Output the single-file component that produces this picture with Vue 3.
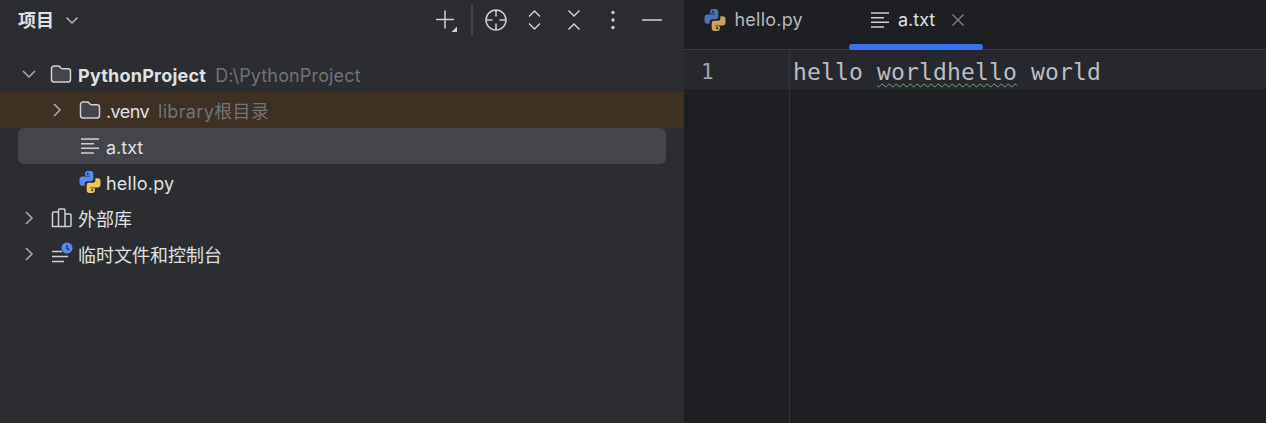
<script setup>
const tree = [
  { id: 'root', depth: 0, arrow: 'down', icon: 'folder', name: 'PythonProject', hint: 'D:\\PythonProject', bold: true, latin: true },
  { id: 'venv', depth: 1, arrow: 'right', icon: 'folder', name: '.venv', hint: 'library根目录', excluded: true, tight: true },
  { id: 'txt', depth: 1, icon: 'text', name: 'a.txt', selected: true },
  { id: 'py', depth: 1, icon: 'python', name: 'hello.py', latin: true },
  { id: 'lib', depth: 0, arrow: 'right', icon: 'library', name: '外部库', cjk: true },
  { id: 'scratch', depth: 0, arrow: 'right', icon: 'scratch', name: '临时文件和控制台', cjk: true },
]
</script>

<template>
  <div class="ide">
    <aside class="project">
      <header class="project-head">
        <div class="title">
          <span class="title-text">项目</span>
          <svg class="title-chev" width="14" height="14" viewBox="0 0 14 14"><path d="M1.500 4.500 7 10l5.500-5.500" /></svg>
        </div>
        <div class="tools">
          <svg class="tool plus" width="24" height="24" viewBox="0 0 24 24">
            <path d="M11 2.500v18M2 11.500h18" />
            <path class="tri" d="M23 18.500v5.500h-5.500z" />
          </svg>
          <i class="sep"></i>
          <svg class="tool" width="24" height="24" viewBox="0 0 24 24">
            <circle cx="12" cy="12" r="10" />
            <path d="M12 2v6.500M12 15.500V22M2 12h6.500M15.500 12H22" />
          </svg>
          <svg class="tool" width="24" height="24" viewBox="0 0 24 24">
            <path d="M6 8.500l5.500-5.500L17 8.500M6 15.500l5.500 5.500 5.500-5.500" />
          </svg>
          <svg class="tool" width="24" height="24" viewBox="0 0 24 24">
            <path d="M6.500 2.500 12 8l5.500-5.500M6.500 21.500 12 16l5.500 5.500" />
          </svg>
          <svg class="tool dots" width="24" height="24" viewBox="0 0 24 24">
            <circle cx="12" cy="4.500" r="1.700" /><circle cx="12" cy="12" r="1.700" /><circle cx="12" cy="19.500" r="1.700" />
          </svg>
          <svg class="tool" width="24" height="24" viewBox="0 0 24 24"><path d="M2 12h20" /></svg>
        </div>
      </header>

      <div class="tree">
        <div v-for="n in tree" :key="n.id" class="row" :class="{ excluded: n.excluded }">
          <div class="row-inner" :class="[`depth-${n.depth}`, { selected: n.selected }]">
            <span class="arrow">
              <svg v-if="n.arrow === 'down'" width="16" height="16" viewBox="0 0 16 16"><path d="M2 5l6 6 6-6" /></svg>
              <svg v-else-if="n.arrow === 'right'" width="16" height="16" viewBox="0 0 16 16"><path d="M5 2l6 6-6 6" /></svg>
            </span>

            <svg v-if="n.icon === 'folder'" class="ico" width="24" height="24" viewBox="0 0 24 24">
              <path class="folder" d="M2.500 6.500A2.500 2.500 0 0 1 5 4h4.200c.6 0 1.100.2 1.500.6l1.500 1.600c.3.300.7.500 1.100.500H19a2.500 2.500 0 0 1 2.500 2.500v8.300a2.500 2.500 0 0 1-2.500 2.500H5a2.500 2.500 0 0 1-2.500-2.500z" />
            </svg>
            <svg v-else-if="n.icon === 'text'" class="ico line" width="24" height="24" viewBox="0 0 24 24">
              <path d="M3 5h18M3 9.700h13M3 14.300h18M3 19h13" />
            </svg>
            <svg v-else-if="n.icon === 'python'" class="ico" width="24" height="24" viewBox="0 0 16 16">
              <path class="py-blue" fill-rule="evenodd" d="M4.700 2.600A1.900 1.900 0 0 1 6.600.7h1.700a1.900 1.900 0 0 1 1.900 1.900v3.300a1.600 1.600 0 0 1-1.600 1.600H6.300a1.900 1.900 0 0 0-1.900 1.900v1.100H3A2 2 0 0 1 1 8.500V6.400a2 2 0 0 1 2-2h4.900v-.6H4.700zM6.500 1.800a.7.7 0 1 0 0 1.400.7.7 0 0 0 0-1.400z" />
              <path class="py-yellow" fill-rule="evenodd" d="M11.300 13.400a1.900 1.900 0 0 1-1.900 1.900H7.700a1.900 1.900 0 0 1-1.900-1.900v-3.300a1.600 1.600 0 0 1 1.600-1.600h2.300a1.900 1.900 0 0 0 1.900-1.900V5.500H13a2 2 0 0 1 2 2v2.100a2 2 0 0 1-2 2H8.100v.6h3.200zM9.500 14.200a.7.7 0 1 0 0-1.400.7.7 0 0 0 0 1.400z" />
            </svg>
            <svg v-else-if="n.icon === 'library'" class="ico line" width="24" height="24" viewBox="0 0 24 24">
              <path d="M3.500 7a1 1 0 0 1 1-1h5v14.500h-6zM9.500 4a1 1 0 0 1 1-1h4.500a1 1 0 0 1 1 1v16.500H9.500zM16 8h5a1 1 0 0 1 1 1v10.500a1 1 0 0 1-1 1h-5z" />
            </svg>
            <svg v-else class="ico line" width="24" height="24" viewBox="0 0 24 24">
              <path d="M3 9.500h10M3 14.500h16M3 19.500h12" />
              <circle class="clock" cx="18" cy="6" r="5.500" />
              <path class="hands" d="M18 3v3.300l2.300 1.700" />
            </svg>

            <span class="name" :class="{ bold: n.bold, latin: n.latin, tight: n.tight, cjk: n.cjk }">{{ n.name }}</span>
            <span v-if="n.hint" class="hint">{{ n.hint }}</span>
          </div>
        </div>
      </div>
    </aside>

    <main class="editor">
      <nav class="tabs">
        <div class="tab">
          <svg width="24" height="24" viewBox="0 0 16 16">
            <path class="py-blue dim" fill-rule="evenodd" d="M4.700 2.600A1.900 1.900 0 0 1 6.600.7h1.700a1.900 1.900 0 0 1 1.900 1.900v3.300a1.600 1.600 0 0 1-1.600 1.600H6.300a1.900 1.900 0 0 0-1.900 1.900v1.100H3A2 2 0 0 1 1 8.500V6.400a2 2 0 0 1 2-2h4.900v-.6H4.700zM6.500 1.800a.7.7 0 1 0 0 1.400.7.7 0 0 0 0-1.400z" />
            <path class="py-yellow dim" fill-rule="evenodd" d="M11.300 13.400a1.900 1.900 0 0 1-1.900 1.900H7.700a1.900 1.900 0 0 1-1.900-1.900v-3.300a1.600 1.600 0 0 1 1.600-1.600h2.300a1.900 1.900 0 0 0 1.900-1.900V5.500H13a2 2 0 0 1 2 2v2.100a2 2 0 0 1-2 2H8.100v.6h3.200zM9.500 14.200a.7.7 0 1 0 0-1.400.7.7 0 0 0 0 1.400z" />
          </svg>
          <span class="tab-name">hello.py</span>
        </div>
        <div class="tab active">
          <svg class="line" width="24" height="24" viewBox="0 0 24 24">
            <path d="M3 5h18M3 9.700h13M3 14.300h18M3 19h13" />
          </svg>
          <span class="tab-name">a.txt</span>
          <svg class="close" width="14" height="14" viewBox="0 0 14 14"><path d="M1.500 1.500l11 11M12.500 1.500l-11 11" /></svg>
        </div>
      </nav>
      <div class="code-area">
        <div class="gutter"><div class="gutter-line">1</div></div>
        <div class="code"><div class="code-line">hello <span class="typo">worldhello</span> world</div></div>
      </div>
    </main>
  </div>
</template>

<style>
html, body { margin: 0; background: #1e1f22; overflow: hidden; }
</style>

<style scoped>
.ide {
  display: flex;
  width: 1266px;
  height: 423px;
  overflow: hidden;
  font-family: Inter, "Noto Sans CJK SC", sans-serif;
  font-size: 18px;
  color: #dfe1e5;
}
.project {
  width: 684px;
  flex: none;
  background: #2b2d30;
}
.project-head {
  display: flex;
  align-items: center;
  justify-content: space-between;
  height: 40px;
  padding: 0 20px 0 18px;
  margin-bottom: 16px;
}
.title { display: flex; align-items: center; gap: 11px; font-weight: 700; }
.title-text { padding-bottom: 2px; }
.title-chev path { fill: none; stroke: #b4b8bf; stroke-width: 1.500; }
.tools { display: flex; align-items: center; gap: 15px; }
.tool { fill: none; stroke: #ced0d6; stroke-width: 1.500; }
.tool .tri { fill: #ced0d6; stroke: none; }
.tool.dots { fill: #ced0d6; stroke: none; }
.plus { margin-right: -1px; }
.sep { width: 2px; height: 30px; background: #43454a; margin: 0 -4px 0 -1px; }

.row { height: 36px; }
.row.excluded { background: #3f3024; }
.row-inner {
  display: flex;
  align-items: center;
  height: 36px;
  margin: 0 18px;
  border-radius: 6px;
}
.row-inner.selected { background: #43454a; }
.depth-0 { padding-left: 3px; }
.depth-1 { padding-left: 31px; }
.arrow { display: flex; align-items: center; width: 16px; margin-right: 12px; flex: none; }
.depth-1 .arrow { margin-right: 13px; }
.arrow path { fill: none; stroke: #a8adb5; stroke-width: 1.500; }
.ico { flex: none; margin-right: 5px; }
.depth-1 .ico { margin-right: 4px; }
.folder { fill: #43454a; stroke: #ced0d6; stroke-width: 1.500; }
.line { fill: none; }
.line path { stroke: #ced0d6; stroke-width: 1.500; fill: none; }
.clock { fill: #548af7; }
.line .hands { stroke: #2b2d30; stroke-width: 1.300; }
.py-blue { fill: #548af7; }
.py-yellow { fill: #f2c55c; }
.py-blue.dim { fill: #4a72b5; }
.py-yellow.dim { fill: #c9a45a; }
.name, .hint { padding-top: 2px; }
.name.cjk { padding-top: 0; }
.name.bold { font-weight: 700; }
.name.latin { letter-spacing: 0.22px; }
.name.tight { letter-spacing: -0.6px; }
.hint { margin-left: 9px; color: #6f737a; letter-spacing: 0.15px; }
.excluded .hint { letter-spacing: 0.35px; padding-top: 0; }

.editor { flex: 1; display: flex; flex-direction: column; background: #1e1f22; min-width: 0; }
.tabs { display: flex; height: 49px; flex: none; border-bottom: 1px solid #393b40; }
.tab {
  position: relative;
  display: flex;
  align-items: center;
  height: 39px;
  padding-left: 18.500px;
  width: 146.500px;
  gap: 8px;
  color: #b4b8bf;
}
.tab .tab-name { letter-spacing: 0.22px; }
.tab.active { width: 115.500px; gap: 6.500px; color: #dfe1e5; }
.tab.active .tab-name { letter-spacing: 0; }
.tab.active::after {
  content: "";
  position: absolute;
  left: 0;
  right: 0;
  top: 44px;
  height: 6px;
  border-radius: 3px;
  background: #3574f0;
}
.close { margin-left: 9.500px; }
.close path { fill: none; stroke: #7a7e85; stroke-width: 1.500; }

.code-area { flex: 1; display: flex; min-height: 0; }
.gutter { width: 105px; flex: none; border-right: 1px solid #313438; }
.gutter-line {
  height: 39px;
  line-height: 45px;
  padding-left: 17px;
  background: #26282e;
  color: #a1a3ab;
  font-family: "DejaVu Sans Mono", monospace;
  font-size: 21px;
}
.code { flex: 1; }
.code-line {
  height: 39px;
  line-height: 45px;
  padding-left: 3px;
  background: #26282e;
  color: #bcbec4;
  font-family: "DejaVu Sans Mono", monospace;
  font-size: 23px;
  letter-spacing: 0.15px;
  white-space: pre;
}
.typo {
  text-decoration: underline wavy #6aab73;
  text-decoration-thickness: 1.300px;
  text-underline-offset: 3px;
}
</style>
